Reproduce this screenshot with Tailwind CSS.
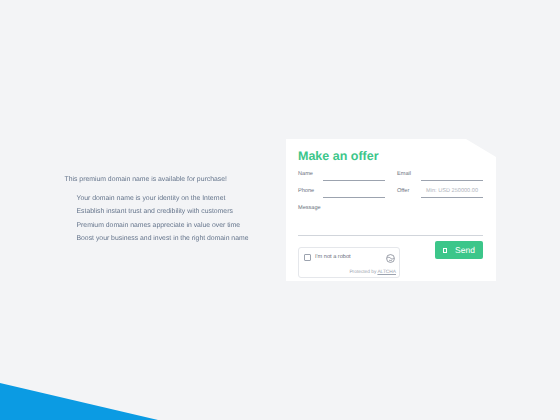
<!DOCTYPE html>
<html lang="en">
<head>
    <meta charset="UTF-8">
    <title>Make an offer</title>
    <script src="https://cdn.jsdelivr.net/npm/@tailwindcss/browser@4"></script>
</head>
<body class="bg-[#f3f4f6]">
    <div class="relative w-[560px] h-[420px] overflow-hidden flex items-start blur-[0.35px] font-['Liberation_Sans',Arial,sans-serif] [text-rendering:geometricPrecision]">
        <!-- Left pitch -->
        <div class="w-[286px] pl-[64.5px] pt-[173.5px] text-[6.85px] text-[#64748b] shrink-0">
            <p class="leading-[12px]">This premium domain name is available for purchase!</p>
            <ul class="mt-[7px] pl-[12px] space-y-[1.5px]">
                <li class="leading-[12px]">Your domain name is your identity on the Internet</li>
                <li class="leading-[12px]">Establish instant trust and credibility with customers</li>
                <li class="leading-[12px]">Premium domain names appreciate in value over time</li>
                <li class="leading-[12px]">Boost your business and invest in the right domain name</li>
            </ul>
        </div>

        <!-- Offer card -->
        <div class="mt-[139px] w-[210px] h-[142px] bg-white pl-[12px] pr-[13px] pt-[9px] [clip-path:polygon(0_0,180px_0,100%_18px,100%_100%,0_100%)]">
            <h1 class="text-[12.5px] leading-[17px] font-bold text-[#3cc68a]">Make an offer</h1>
            <div class="mt-[4px] grid grid-cols-[87px_86px] gap-x-[12px] gap-y-[5px] text-[5.6px] text-[#6b7280]">
                <div class="flex items-start h-[12px]">
                    <span class="w-[25px] leading-[10px]">Name</span>
                    <div class="flex-1 h-full border-b border-[#9ca3af]"></div>
                </div>
                <div class="flex items-start h-[12px]">
                    <span class="w-[24px] leading-[10px]">Email</span>
                    <div class="flex-1 h-full border-b border-[#9ca3af]"></div>
                </div>
                <div class="flex items-start h-[12px]">
                    <span class="w-[25px] leading-[10px]">Phone</span>
                    <div class="flex-1 h-full border-b border-[#9ca3af]"></div>
                </div>
                <div class="flex items-start h-[12px]">
                    <span class="w-[24px] leading-[10px]">Offer</span>
                    <div class="flex-1 h-full border-b border-[#9ca3af] text-[#b0b5bd] text-right pr-[5px] leading-[10px]">Min: USD 250000.00</div>
                </div>
            </div>
            <div class="mt-[6px] text-[5.6px] leading-[8px] text-[#6b7280]">Message</div>
            <div class="h-[24px] border-b-[1.5px] border-[#d1d5db]"></div>
            <div class="flex justify-between items-start mt-[5px]">
                <div class="mt-[6px] w-[102px] h-[31px] border border-[#e5e7eb] rounded-[3px] relative">
                    <div class="flex items-center pl-[5px] pt-[6px] gap-[4px]">
                        <div class="w-[7px] h-[7px] border border-[#9ca3af] rounded-[1px]"></div>
                        <span class="text-[5.6px] leading-[7px] text-[#6b7280] -mt-[1px]">I'm not a robot</span>
                    </div>
                    <svg class="absolute right-[4px] top-[6px] w-[9px] h-[9px]" viewBox="0 0 24 24" fill="none" stroke="#6b7280" stroke-width="1.8"><circle cx="12" cy="12" r="10.5"/><path d="M3 11c3-3 5-3 9 0s6 3 9 0M8 16c2 2 6 2 8 0"/></svg>
                    <div class="absolute right-[3px] bottom-[1px] text-[4.8px] leading-[6px] text-[#9ca3af]">Protected by <span class="underline">ALTCHA</span></div>
                </div>
                <div class="w-[48px] h-[18px] bg-[#3cc68a] rounded-[2px] flex items-center justify-center gap-[8px] text-white text-[8.5px]">
                    <span class="w-[4px] h-[5px] border border-white"></span>
                    <span>Send</span>
                </div>
            </div>
        </div>

        <!-- Corner wedge -->
        <div class="absolute left-0 bottom-0 w-[158px] h-[37px] bg-[#0b9be3] [clip-path:polygon(0_0,100%_100%,0_100%)]"></div>
    </div>
</body>
</html>
